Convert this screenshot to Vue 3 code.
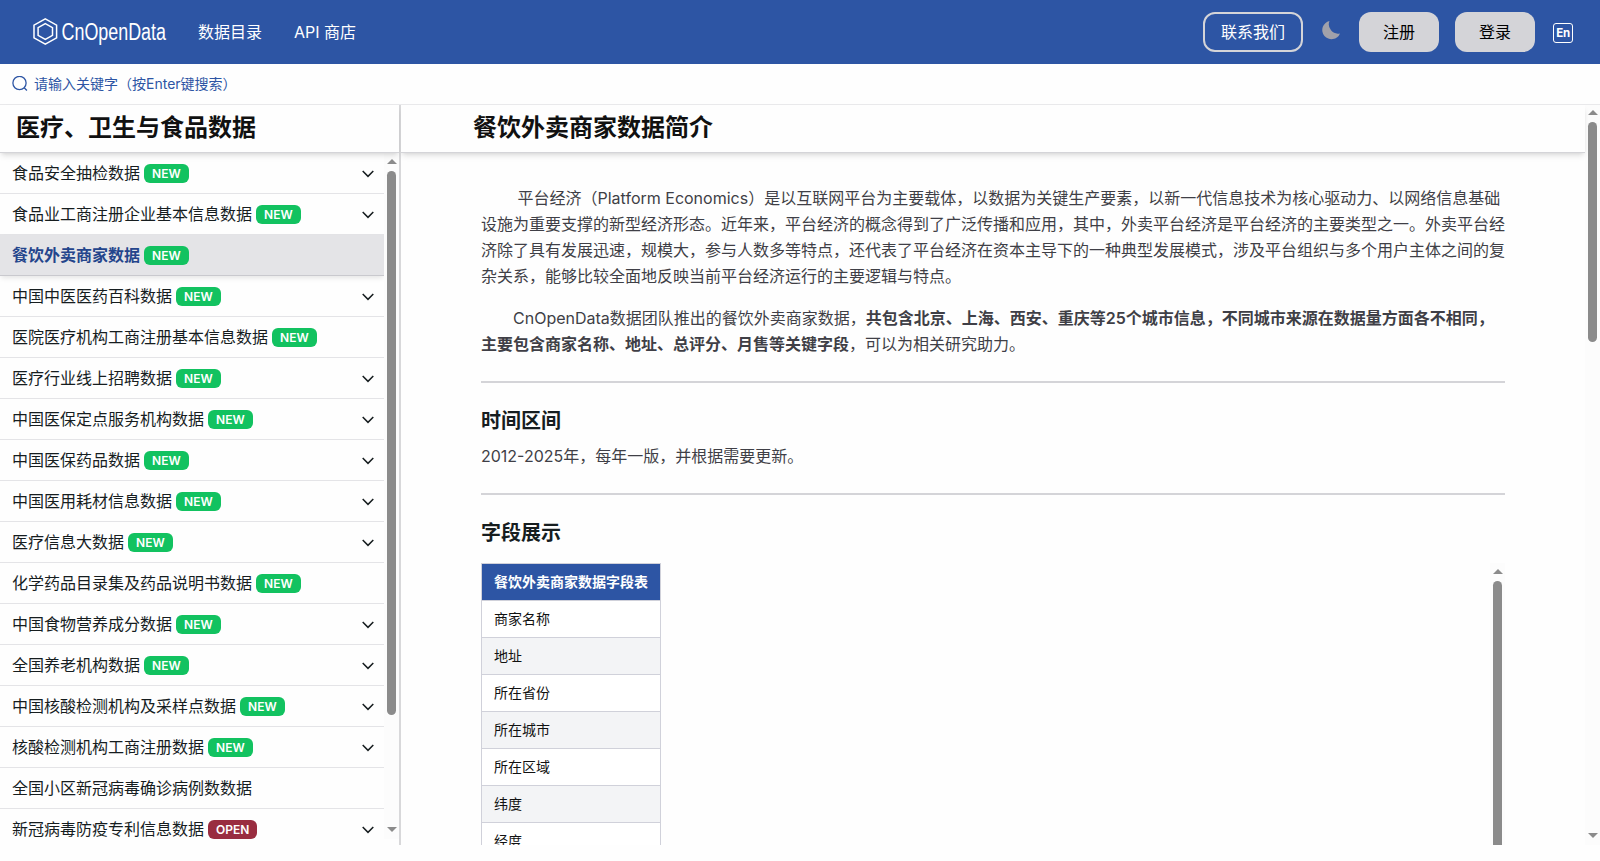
<script setup>
const items = [
  { name: '食品安全抽检数据', tag: 'NEW', more: true },
  { name: '食品业工商注册企业基本信息数据', tag: 'NEW', more: true },
  { name: '餐饮外卖商家数据', tag: 'NEW', active: true },
  { name: '中国中医医药百科数据', tag: 'NEW', more: true },
  { name: '医院医疗机构工商注册基本信息数据', tag: 'NEW' },
  { name: '医疗行业线上招聘数据', tag: 'NEW', more: true },
  { name: '中国医保定点服务机构数据', tag: 'NEW', more: true },
  { name: '中国医保药品数据', tag: 'NEW', more: true },
  { name: '中国医用耗材信息数据', tag: 'NEW', more: true },
  { name: '医疗信息大数据', tag: 'NEW', more: true },
  { name: '化学药品目录集及药品说明书数据', tag: 'NEW' },
  { name: '中国食物营养成分数据', tag: 'NEW', more: true },
  { name: '全国养老机构数据', tag: 'NEW', more: true },
  { name: '中国核酸检测机构及采样点数据', tag: 'NEW', more: true },
  { name: '核酸检测机构工商注册数据', tag: 'NEW', more: true },
  { name: '全国小区新冠病毒确诊病例数数据' },
  { name: '新冠病毒防疫专利信息数据', tag: 'OPEN', more: true },
]
const fields = ['商家名称', '地址', '所在省份', '所在城市', '所在区域', '纬度', '经度']
</script>

<template>
  <div class="page">
    <header class="topbar">
      <svg class="logo" width="140" height="32" viewBox="0 0 140 32">
        <g fill="none" stroke="#fff" stroke-width="1.5">
          <path d="M13.3 2.9 24.6 9.2V21.8L13.3 28.1 2 21.8V9.2Z" />
          <path d="M13.3 7.6 20.5 11.6V19.4L13.3 23.4 6.1 19.4V11.6Z" />
        </g>
        <text x="29.5" y="23.5" textLength="104.5" lengthAdjust="spacingAndGlyphs">CnOpenData</text>
      </svg>
      <nav class="nav"><a>数据目录</a><a>API 商店</a></nav>
      <div class="actions">
        <button class="btn outline">联系我们</button>
        <svg class="moon" width="20" height="20" viewBox="0 0 20 20">
          <path d="M8.5 1A9.2 9.2 0 1 0 19 13.4 9.2 9.2 0 0 1 8.5 1Z" />
        </svg>
        <button class="btn">注册</button>
        <button class="btn login">登录</button>
        <span class="lang">En</span>
      </div>
    </header>

    <div class="search">
      <svg width="16" height="16" viewBox="0 0 16 16" fill="none" stroke="currentColor" stroke-width="1.3">
        <circle cx="7.5" cy="7" r="6.6" /><path d="m12.2 11.8 2.7 2.7" />
      </svg>
      <span>请输入关键字（按Enter键搜索）</span>
    </div>

    <div class="body">
      <aside class="side">
        <h2 class="head">医疗、卫生与食品数据</h2>
        <div class="side-scroll">
          <ul class="list">
            <li v-for="it in items" :key="it.name" :class="{ active: it.active }">
              <span>{{ it.name }}</span>
              <b v-if="it.tag" class="tag" :class="{ open: it.tag === 'OPEN' }">{{ it.tag }}</b>
              <svg v-if="it.more" class="chev" width="12" height="8" viewBox="0 0 12 8">
                <path d="M.7 1 6 6.4 11.3 1" />
              </svg>
            </li>
          </ul>
          <div class="bar side-bar">
            <svg class="arrow" width="10" height="5"><path d="M5 0 10 5H0Z" /></svg>
            <div class="thumb side-thumb" />
            <svg class="arrow down" width="10" height="5"><path d="M0 0H10L5 5Z" /></svg>
          </div>
        </div>
      </aside>

      <main class="main">
        <div class="content">
          <h1 class="head title">餐饮外卖商家数据简介</h1>
          <article class="article">
            <p>&nbsp;平台经济（Platform Economics）是以互联网平台为主要载体，以数据为关键生产要素，以新一代信息技术为核心驱动力、以网络信息基础设施为重要支撑的新型经济形态。近年来，平台经济的概念得到了广泛传播和应用，其中，外卖平台经济是平台经济的主要类型之一。外卖平台经济除了具有发展迅速，规模大，参与人数多等特点，还代表了平台经济在资本主导下的一种典型发展模式，涉及平台组织与多个用户主体之间的复杂关系，能够比较全面地反映当前平台经济运行的主要逻辑与特点。</p>
            <p>CnOpenData数据团队推出的餐饮外卖商家数据，<strong>共包含北京、上海、西安、重庆等25个城市信息，不同城市来源在数据量方面各不相同，主要包含商家名称、地址、总评分、月售等关键字段</strong>，可以为相关研究助力。</p>
            <hr>
            <h3>时间区间</h3>
            <p class="plain">2012-2025年，每年一版，并根据需要更新。</p>
            <hr>
            <h3>字段展示</h3>
            <div class="table-wrap">
              <table>
                <thead><tr><th>餐饮外卖商家数据字段表</th></tr></thead>
                <tbody><tr v-for="f in fields" :key="f"><td>{{ f }}</td></tr></tbody>
              </table>
              <div class="bar">
                <svg class="arrow" width="10" height="5"><path d="M5 0 10 5H0Z" /></svg>
                <div class="thumb table-thumb" />
              </div>
            </div>
          </article>
        </div>
        <div class="bar main-bar">
          <svg class="arrow" width="10" height="5"><path d="M5 0 10 5H0Z" /></svg>
          <div class="thumb main-thumb" />
          <svg class="arrow down" width="10" height="5"><path d="M0 0H10L5 5Z" /></svg>
        </div>
      </main>
    </div>
  </div>
</template>

<style>
body { margin: 0; background: #fefefe; }
</style>

<style scoped>
* { box-sizing: border-box; }
.page { width: 1600px; height: 861px; overflow: hidden; background: #fefefe; color: #161d1f; font: 16px/24px Inter, "Noto Sans CJK SC", sans-serif; }
.topbar { height: 64px; background: #2d55a4; color: #fff; display: flex; align-items: center; padding: 0 24px 0 32px; }
.logo { display: block; margin-top: -1px; overflow: visible; }
.logo text { fill: #fff; font: 23.5px "Liberation Sans", sans-serif; }
.nav { display: flex; gap: 32px; margin-left: 26px; }
.actions { margin-left: auto; display: flex; align-items: center; }
.btn { font: inherit; height: 40px; padding: 0; width: 80px; border: 0; border-radius: 12px; background: #d4d4d8; color: #000; }
.outline { width: 100px; background: transparent; border: 2px solid #d4d4d8; color: #fff; }
.moon { margin: -4px 18px 0 18px; fill: #a1a1aa; }
.login { margin-left: 16px; }
.lang { width: 20px; height: 20px; margin: 1px 3px 0 18px; border: 1.5px solid #fff; border-radius: 3px; font: 700 11.5px/18px Inter, sans-serif; letter-spacing: -.3px; text-align: center; }
.search { height: 40px; display: flex; align-items: center; gap: 6px; padding-left: 12px; font-size: 14px; color: #2d55a4; }
.body { height: 741px; display: flex; border-top: 1px solid #e9e9eb; }
.side { width: 401px; border-right: 2px solid #d8d8da; display: flex; flex-direction: column; }
.head { margin: 0; height: 48px; flex: none; padding-left: 16px; font-size: 24px; line-height: 45px; font-weight: 600; color: #111; border-bottom: 1px solid #d4d4d8; background: #fefefe; box-shadow: 0 4px 6px -1px #0000001a, 0 2px 4px -2px #0000001a; position: relative; }
.side-scroll { height: 686px; display: flex; overflow: hidden; }
.list { list-style: none; margin: 0; padding: 0; width: 384px; }
.list li { height: 41px; border-bottom: 1px solid #e4e4e7; display: flex; align-items: center; gap: 4px; padding: 0 10px 0 12px; }
.list .active { background: #e4e4e7; color: #24458c; font-weight: 600; border-color: #c9c9ce; box-shadow: 0 3px 5px -1px #0000001a; }
.tag { height: 19px; padding: 0 8px; border-radius: 6px; background: #12c260; color: #fff; font: 600 12px/19px Inter, sans-serif; }
.open { background: #992d40; }
.chev { margin: 1px 0 0 auto; fill: none; stroke: #161d1f; stroke-width: 1.5; }
.bar { width: 15px; flex: none; background: #fcfcfc; display: flex; flex-direction: column; align-items: center; padding-top: 6px; }
.main-bar { padding-top: 5px; }
.arrow { display: block; flex: none; fill: #8b8b8b; }
.down { margin: auto 0 7px; }
.thumb { width: 9px; margin-top: 7px; border-radius: 5px; background: #8b8b8b; flex: none; }
.side-thumb { height: 544px; }
.main-thumb { height: 220px; }
.table-thumb { height: 300px; }
.main { flex: 1; display: flex; min-width: 0; overflow: hidden; }
.content { width: 1184px; }
.title { padding-left: 72px; }
.article { width: 1024px; margin-left: 80px; padding-top: 32px; color: #3f3f46; }
p { margin: 0 0 16px; line-height: 26px; text-indent: 32px; }
.plain { text-indent: 0; margin: 0; }
hr { border: 0; height: 2px; margin: 24px 0; background: #d4d4d8; }
h3 { margin: 0 0 8px; font-size: 20px; line-height: 28px; font-weight: 600; color: #161d1f; }
strong { font-weight: 600; }
.table-wrap { display: flex; justify-content: space-between; margin-top: 16px; height: 284px; overflow: hidden; }
table { align-self: flex-start; border-collapse: collapse; font-size: 14px; line-height: 20px; color: #111; }
th, td { height: 37px; padding: 0 12px; border: 1px solid #d0d1da; text-align: left; font-weight: 400; }
th { background: #2d55a4; color: #fff; font-weight: 600; }
tbody tr { background: #fff; }
tbody tr:nth-child(even) { background: #f3f4f6; }
</style>
